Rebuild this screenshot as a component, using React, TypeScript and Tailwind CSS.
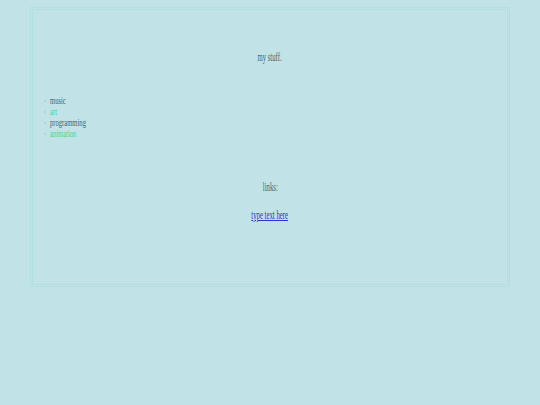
export default function App() {
  const items = [
    { label: 'music', color: 'text-[#46656b]' },
    { label: 'art', color: 'text-[#3fd98a]' },
    { label: 'programming', color: 'text-[#46656b]' },
    { label: 'animation', color: 'text-[#3fd98a]' },
  ];

  return (
    <div className="min-h-[405px] bg-[#c1e2e6] pt-[7px] font-['Liberation_Serif',serif] text-[#46656b]">
      <div className="mx-auto w-[480px] h-[280px] border-[3px] border-double border-[#b3dfe0]">
        <p className="mt-[40px] text-center text-[12px] leading-[14px]">
          <span className="inline-block scale-x-[0.56]">my stuff.</span>
        </p>

        <ul className="mt-[31px] ml-[11px] flex flex-col text-[11px] leading-[11px]">
          {items.map((item) => (
            <li key={item.label} className="flex items-center gap-[4px]">
              <span className="w-[2px] h-[2px] rounded-full bg-[#a4d2cf]" />
              <span className={`inline-block origin-left scale-x-[0.6] ${item.color}`}>{item.label}</span>
            </li>
          ))}
        </ul>

        <p className="mt-[41px] text-center text-[12px] leading-[14px]">
          <span className="inline-block scale-x-[0.56]">links:</span>
        </p>
        <p className="mt-[14px] text-center text-[12px] leading-[14px]">
          <a href="#" className="inline-block scale-x-[0.56] text-[#3030d0] underline">type text here</a>
        </p>
      </div>
    </div>
  );
}
